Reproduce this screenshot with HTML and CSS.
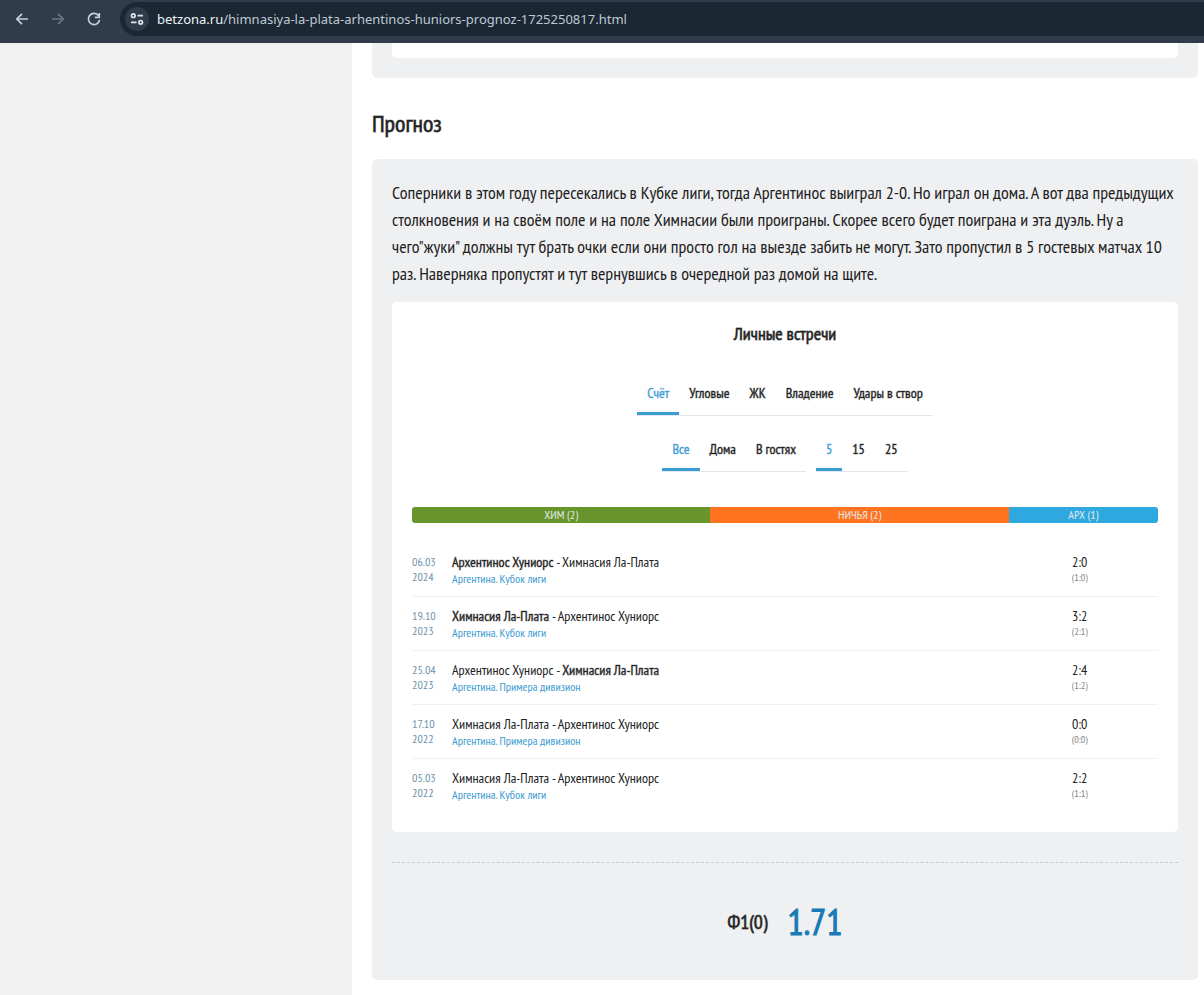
FILE: index.html
```html
<!DOCTYPE html>
<html lang="ru">
<head>
<meta charset="utf-8">
<meta name="viewport" content="width=device-width, initial-scale=1">
<title>Прогноз</title>
<link rel="stylesheet" href="styles.css">
</head>
<body>
<header class="toolbar">
  <nav class="toolbar-nav">
    <button class="tool" type="button" aria-label="Назад"><svg viewBox="0 0 16 16"><path d="M14 8H3M8 2.8 2.8 8 8 13.2"/></svg></button>
    <button class="tool tool-off" type="button" aria-label="Вперёд"><svg viewBox="0 0 16 16"><path d="M2 8h11M8 2.8 13.2 8 8 13.2"/></svg></button>
    <button class="tool" type="button" aria-label="Обновить"><svg viewBox="0 0 16 16"><path d="M12.6 4.8A5.6 5.6 0 1 0 13.5 9M13.3 2v4.4H8.9"/></svg></button>
  </nav>
  <div class="address">
    <button class="site-info" type="button" aria-label="Сведения о сайте"><svg viewBox="0 0 16 16"><circle cx="4.3" cy="4.7" r="1.8"/><path d="M8.5 4.7H14M2 11.3h5.5"/><circle cx="11.7" cy="11.3" r="1.8"/></svg></button>
    <a class="url" href="#"><span class="url-host">betzona.ru</span>/himnasiya-la-plata-arhentinos-huniors-prognoz-1725250817.html</a>
  </div>
</header>
<div class="page">
  <aside class="side"></aside>
  <main class="content">
    <section class="panel panel-tail"><div class="card card-tail"></div></section>
    <h2 class="heading">Прогноз</h2>
    <section class="panel">
      <p class="text">Соперники в этом году пересекались в Кубке лиги, тогда Аргентинос выиграл 2-0. Но играл он дома. А вот два предыдущих столкновения и на своём поле и на поле Химнасии были проиграны. Скорее всего будет поиграна и эта дуэль. Ну а чего"жуки" должны тут брать очки если они просто гол на выезде забить не могут. Зато пропустил в 5 гостевых матчах 10 раз. Наверняка пропустят и тут вернувшись в очередной раз домой на щите.</p>
      <div class="card">
        <h3 class="title">Личные встречи</h3>
        <div class="tab-row">
          <div class="tabs">
            <button class="tab active" type="button">Счёт</button>
            <button class="tab" type="button">Угловые</button>
            <button class="tab" type="button">ЖК</button>
            <button class="tab" type="button">Владение</button>
            <button class="tab" type="button">Удары в створ</button>
          </div>
        </div>
        <div class="tab-row">
          <div class="tabs">
            <button class="tab active" type="button">Все</button>
            <button class="tab" type="button">Дома</button>
            <button class="tab" type="button">В гостях</button>
          </div>
          <div class="tabs">
            <button class="tab active" type="button">5</button>
            <button class="tab" type="button">15</button>
            <button class="tab" type="button">25</button>
          </div>
        </div>
        <div class="balance">
          <span class="share share-home">ХИМ (2)</span>
          <span class="share share-draw">НИЧЬЯ (2)</span>
          <span class="share share-away">АРХ (1)</span>
        </div>
        <table class="games">
          <tr><td class="date">06.03<br>2024</td><td class="game"><b>Архентинос Хуниорс</b> - Химнасия Ла-Плата<a class="league" href="#">Аргентина. Кубок лиги</a></td><td class="score">2:0<small>(1:0)</small></td></tr>
          <tr><td class="date">19.10<br>2023</td><td class="game"><b>Химнасия Ла-Плата</b> - Архентинос Хуниорс<a class="league" href="#">Аргентина. Кубок лиги</a></td><td class="score">3:2<small>(2:1)</small></td></tr>
          <tr><td class="date">25.04<br>2023</td><td class="game">Архентинос Хуниорс - <b>Химнасия Ла-Плата</b><a class="league" href="#">Аргентина. Примера дивизион</a></td><td class="score">2:4<small>(1:2)</small></td></tr>
          <tr><td class="date">17.10<br>2022</td><td class="game">Химнасия Ла-Плата - Архентинос Хуниорс<a class="league" href="#">Аргентина. Примера дивизион</a></td><td class="score">0:0<small>(0:0)</small></td></tr>
          <tr><td class="date">05.03<br>2022</td><td class="game">Химнасия Ла-Плата - Архентинос Хуниорс<a class="league" href="#">Аргентина. Кубок лиги</a></td><td class="score">2:2<small>(1:1)</small></td></tr>
        </table>
      </div>
      <div class="bet"><span class="bet-name">Ф1(0)</span><span class="bet-odds">1.71</span></div>
    </section>
  </main>
</div>
</body>
</html>
```
FILE: styles.css
```css
* { box-sizing: border-box; }
body {
  margin: 0;
  min-height: 100vh;
  display: flex;
  flex-direction: column;
  background: #fff;
  color: #212121;
  font-family: "PT Sans Narrow", "Liberation Sans Narrow", "Liberation Sans", sans-serif;
}
button { border: 0; background: none; font: inherit; color: inherit; cursor: pointer; }
a { text-decoration: none; }

/* Emphasis thickens the regular face instead of using the wider bold one */
.heading, .title, .tab, .game b, .bet { font-weight: normal; }
.heading, .title, .bet-name { -webkit-text-stroke: 1px rgb(33 33 33 / 60%); }
.tab, .game b { -webkit-text-stroke: 1px rgb(33 33 33 / 35%); }
.bet-odds { -webkit-text-stroke: 1px currentColor; }

.toolbar {
  display: flex;
  align-items: center;
  gap: 8px;
  padding: 2px 0 7px 8px;
  background: #303c4b;
}
.toolbar-nav { display: flex; gap: 8px; }
.tool { width: 28px; height: 28px; padding: 6px; color: #c3d0e0; }
.tool-off { color: #6b7683; }
.toolbar svg, .site-info svg {
  display: block;
  width: 16px;
  height: 16px;
  fill: none;
  stroke: currentColor;
  stroke-width: 1.7;
}
.address {
  flex: 1;
  display: flex;
  align-items: center;
  gap: 8px;
  height: 34px;
  padding-left: 5px;
  margin-left: 4px;
  border-radius: 17px 0 0 17px;
  background: #1b2733;
}
.site-info { width: 24px; height: 24px; padding: 4px; border-radius: 50%; background: #303c4b; color: #dfe5ec; }
.url { font: 13px/20px "Noto Sans", "Open Sans", sans-serif; color: #bfc9d4; }
.url-host { color: #eef2f6; }

.page { flex: 1; display: flex; }
.side { width: 352px; flex: none; background: #f1f1f1; }
.content { flex: 1; min-width: 0; padding: 0 6px 15px 20px; }
.panel { padding: 20px; border-radius: 5px; background: #eff0f2; }
.panel-tail { padding-top: 0; border-radius: 0 0 5px 5px; }
.card { padding: 20px; border-radius: 5px; background: #fff; }
.card-tail { padding: 0; height: 15px; border-radius: 0 0 5px 5px; }
.heading { margin: 30px 0 19px; font-size: 24px; line-height: 32px; }
.text { margin: 0 0 15px; font-size: 18px; line-height: 27px; }
.title { margin: 0 0 28px; font-size: 18px; line-height: 24px; text-align: center; }

.tab-row { display: flex; justify-content: center; gap: 10px; margin-bottom: 14px; }
.tabs { display: flex; border-bottom: 1px solid #e0e6e9; }
.tab {
  height: 41px;
  padding: 0 10px;
  border-bottom: 3px solid transparent;
  font-size: 14px;
}
.tab.active { border-color: #3c9cd2; color: #3c9cd2; -webkit-text-stroke-color: rgb(60 156 210 / 35%); }

.balance { display: flex; margin: 35px 0 20px; border-radius: 3px; overflow: hidden; }
.share { font-size: 12px; line-height: 16px; text-align: center; color: #e4e8ea; }
.share-home { width: 40%; background: #67952b; }
.share-draw { width: 40%; background: #ff7421; }
.share-away { width: 20%; background: #2fa8e0; }

.games { width: 100%; border-spacing: 0; table-layout: fixed; }
.games td { height: 54px; padding: 10px 0 0; border-bottom: 1px solid #eff0f2; vertical-align: top; }
.games tr:last-child td { height: 53px; border-bottom: 0; }
.games .date { width: 40px; padding-top: 11px; font-size: 12px; line-height: 15px; color: #6c92ad; }
.game { font-size: 14px; line-height: 18px; }
.league { display: block; font-size: 12px; line-height: 16px; color: #3c9cd2; }
.score { width: 21%; font-size: 14px; line-height: 18px; text-align: center; }
.score small { display: block; font-size: 10px; line-height: 14px; color: #808080; }

.bet {
  display: flex;
  justify-content: center;
  align-items: center;
  gap: 20px;
  margin-top: 30px;
  padding: 35px 0 14px;
  border-top: 1px dashed #cacccf;
}
.bet-name { font-size: 20px; }
.bet-odds { font-size: 36px; line-height: 48px; color: #167bb6; }
```
